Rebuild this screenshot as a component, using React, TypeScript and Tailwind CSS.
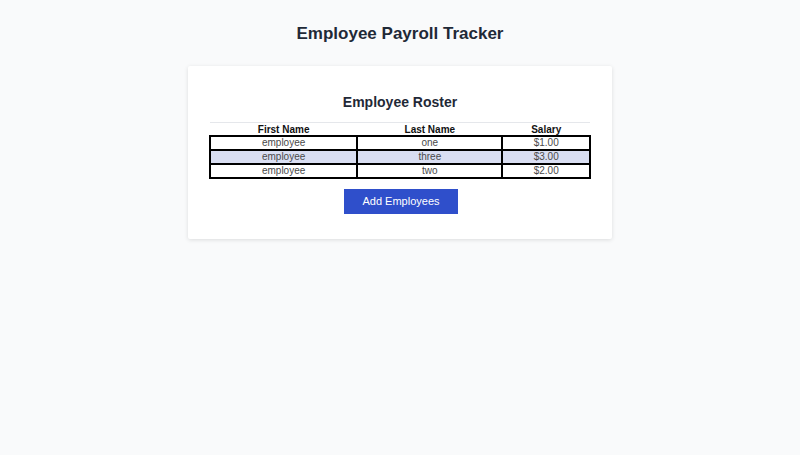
const employees = [
  { first: 'employee', last: 'one', salary: '$1.00' },
  { first: 'employee', last: 'three', salary: '$3.00' },
  { first: 'employee', last: 'two', salary: '$2.00' },
];

export default function App() {
  return (
    <div className="min-h-screen bg-[#f9fafb] pt-[24px] font-['Liberation_Sans',Arial,sans-serif]">
      <h1 className="text-center text-[17px] leading-[20px] font-bold text-[#1f2937]">
        Employee Payroll Tracker
      </h1>

      <div className="mx-auto mt-[22px] w-[424px] rounded-[2px] bg-white px-[20px] pt-[28px] pb-[25px] shadow-[0_1px_4px_rgba(0,0,0,0.12)]">
        <h2 className="text-center text-[14px] leading-[16px] font-bold text-[#1f2937]">
          Employee Roster
        </h2>

        <table className="mt-[12px] ml-[1px] w-[382px] border-collapse text-[10px] leading-[12px]">
          <colgroup>
            <col className="w-[148px]" />
            <col className="w-[146px]" />
            <col className="w-[88px]" />
          </colgroup>
          <thead>
            <tr className="border-t border-[#e5e7eb]">
              <th className="pt-[1px] text-[10px] leading-[11px] font-bold text-[#111]">First Name</th>
              <th className="pt-[1px] text-[10px] leading-[11px] font-bold text-[#111]">Last Name</th>
              <th className="pt-[1px] text-[10px] leading-[11px] font-bold text-[#111]">Salary</th>
            </tr>
          </thead>
          <tbody>
            {employees.map((e, i) => (
              <tr key={i} className={i === 1 ? 'bg-[#d9def2]' : 'bg-white'}>
                <td className="border-2 border-black p-0 text-center text-[#4a4a4a]">{e.first}</td>
                <td className="border-2 border-black p-0 text-center text-[#4a4a4a]">{e.last}</td>
                <td className="border-2 border-black p-0 text-center text-[#4a4a4a]">{e.salary}</td>
              </tr>
            ))}
          </tbody>
        </table>

        <div className="mt-[10px] flex justify-center pl-[2px]">
          <button className="h-[25px] w-[114px] bg-[#2f4fcb] text-[11px] text-white">
            Add Employees
          </button>
        </div>
      </div>
    </div>
  );
}
